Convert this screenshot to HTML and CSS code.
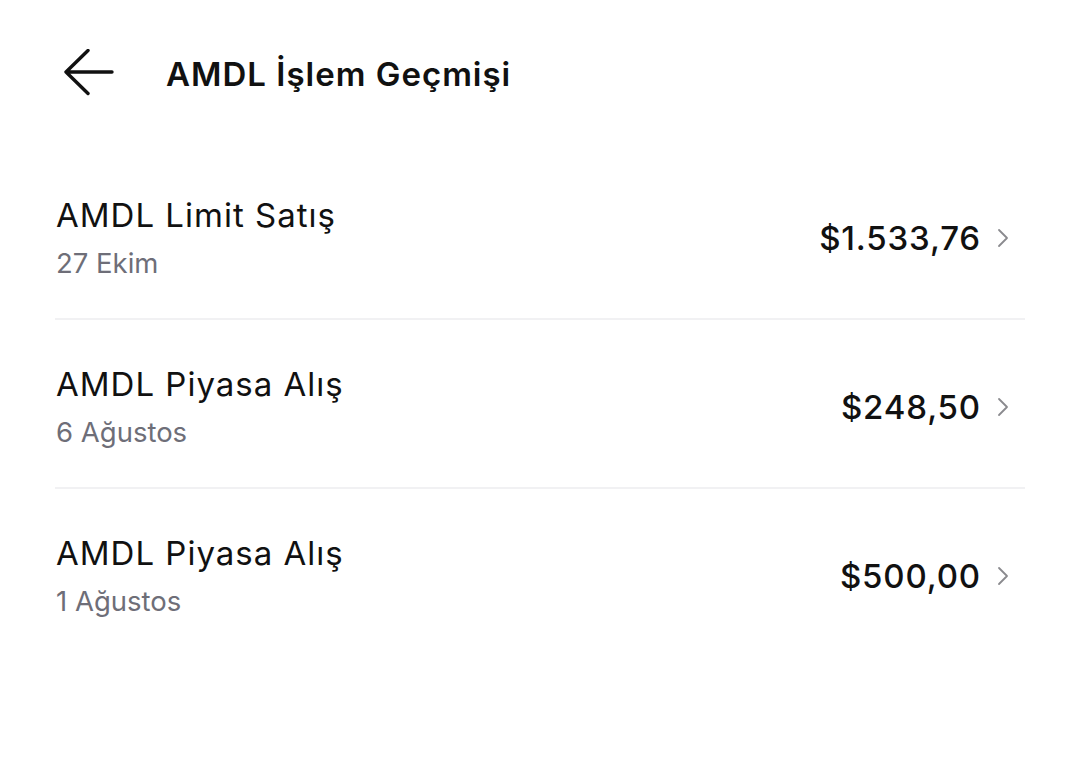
FILE: index.html
```html
<!DOCTYPE html>
<html lang="tr">
<head>
<meta charset="utf-8">
<link rel="stylesheet" href="styles.css">
</head>
<body>
<header class="header">
  <svg class="back" width="52" height="52" viewBox="0 0 52 52" aria-hidden="true">
    <path d="M50 23H4M26 1.5L4 23L26 44.5" fill="none" stroke="#111" stroke-width="3.4" stroke-linecap="round" stroke-linejoin="round"/>
  </svg>
  <h1 class="title">AMDL İşlem Geçmişi</h1>
</header>
<main class="list">
  <div class="row">
    <div class="info">
      <div class="name">AMDL Limit Satış</div>
      <div class="date">27 Ekim</div>
    </div>
    <div class="amount">$1.533,76</div>
    <svg class="chev" width="12" height="20" viewBox="0 0 12 20" aria-hidden="true"><path d="M2 2L10 10L2 18" fill="none" stroke="#8a8a8e" stroke-width="1.8" stroke-linecap="round" stroke-linejoin="round"/></svg>
  </div>
  <div class="row">
    <div class="info">
      <div class="name">AMDL Piyasa Alış</div>
      <div class="date">6 Ağustos</div>
    </div>
    <div class="amount">$248,50</div>
    <svg class="chev" width="12" height="20" viewBox="0 0 12 20" aria-hidden="true"><path d="M2 2L10 10L2 18" fill="none" stroke="#8a8a8e" stroke-width="1.8" stroke-linecap="round" stroke-linejoin="round"/></svg>
  </div>
  <div class="row last">
    <div class="info">
      <div class="name">AMDL Piyasa Alış</div>
      <div class="date">1 Ağustos</div>
    </div>
    <div class="amount">$500,00</div>
    <svg class="chev" width="12" height="20" viewBox="0 0 12 20" aria-hidden="true"><path d="M2 2L10 10L2 18" fill="none" stroke="#8a8a8e" stroke-width="1.8" stroke-linecap="round" stroke-linejoin="round"/></svg>
  </div>
</main>
</body>
</html>
```
FILE: styles.css
```css
html, body {
  margin: 0;
  padding: 0;
  background: #fff;
  width: 1080px;
  height: 782px;
  overflow: hidden;
}
body {
  font-family: Inter, "Noto Sans", sans-serif;
  color: #111;
}
.header {
  height: 151px;
  display: flex;
  align-items: center;
  padding: 0 0 3px 62px;
  box-sizing: border-box;
}
.back {
  display: block;
  margin-top: 1px;
}
.title {
  margin: 0 0 0 52px;
  font-size: 33px;
  font-weight: 600;
  line-height: 40px;
  letter-spacing: 1px;
}
.list {
  margin: 0 55px;
}
.row {
  display: flex;
  align-items: center;
  padding: 44px 16px 38px 1px;
  border-bottom: 2px solid #f1f1f3;
}
.row.last {
  border-bottom: none;
}
.info {
  flex: 1;
}
.name {
  font-size: 33px;
  line-height: 40px;
  font-weight: 400;
  letter-spacing: 1px;
}
.date {
  margin-top: 11px;
  font-size: 27.5px;
  line-height: 34px;
  color: #6e6e78;
}
.amount {
  font-size: 33px;
  font-weight: 500;
  line-height: 40px;
  letter-spacing: 0.85px;
  margin-right: 16px;
}
.chev {
  display: block;
}
```
